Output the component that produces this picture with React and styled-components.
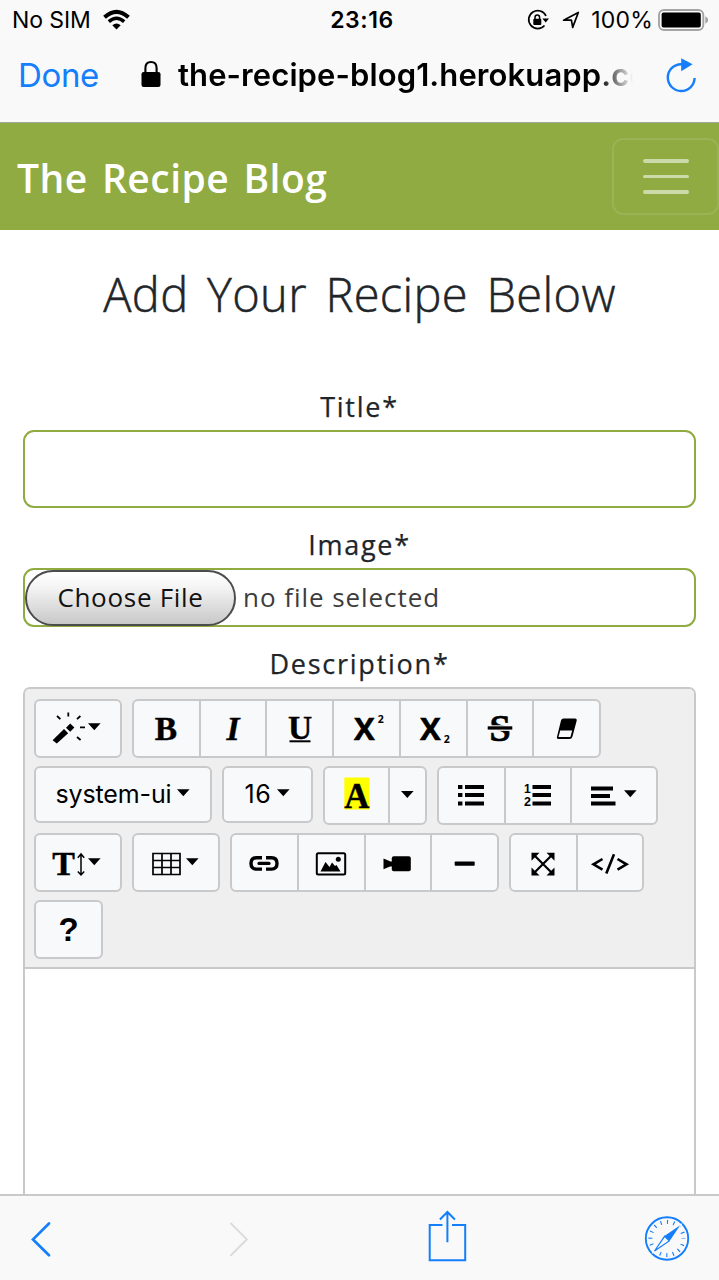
import React from 'react';
import styled, { createGlobalStyle, css } from 'styled-components';

const UI_FONT = 'Inter, "Liberation Sans", sans-serif';
const PAGE_FONT = '"Open Sans", "Noto Sans", sans-serif';
const GREEN = '#8fab42';
const BLUE = '#147efb';
const LINE = '#c8c9cb';

const GlobalStyle = createGlobalStyle`
  * { box-sizing: border-box; }
  body { margin: 0; background: #fff; }
  svg { display: block; flex: none; overflow: visible; }
`;

const Screen = styled.div`
  width: 719px;
  height: 1280px;
  display: flex;
  flex-direction: column;
  overflow: hidden;
  background: #fff;
  font-family: ${PAGE_FONT};
  color: #212529;
`;

const StatusBar = styled.header`
  height: 40px;
  flex: none;
  display: grid;
  grid-template-columns: 1fr auto 1fr;
  align-items: center;
  padding: 0 10px 0 12px;
  background: #f9f9f9;
  color: #000;
  font: 400 23px/40px ${UI_FONT};
`;

const StatusSide = styled.div`
  display: flex;
  align-items: center;
  justify-content: ${(p) => (p.$end ? 'flex-end' : 'flex-start')};
  letter-spacing: ${(p) => (p.$end ? '0.2px' : '-0.1px')};
`;

const Carrier = styled.span`
  margin-right: 12px;
`;

const Clock = styled.span`
  font-weight: 600;
  letter-spacing: 0.6px;
  padding-left: 3px;
`;

const BatteryLevel = styled.span`
  margin: 0 5px 0 11px;
`;

const IconGap = styled.span`
  width: 12px;
`;

const AddressBar = styled.div`
  height: 83px;
  flex: none;
  display: flex;
  align-items: center;
  padding: 0 22px 12px 18px;
  background: #f9f9f9;
  border-bottom: 1px solid #a3a99a;
  font-family: ${UI_FONT};
`;

const Done = styled.span`
  color: ${BLUE};
  font-size: 33px;
  letter-spacing: -0.35px;
  margin-right: 42px;
`;

const Address = styled.span`
  flex: 1;
  margin: 0 33px 0 17px;
  padding-bottom: 2px;
  overflow: hidden;
  white-space: nowrap;
  color: #000;
  font-size: 31px;
  font-weight: 600;
  letter-spacing: 0.1px;
  mask-image: linear-gradient(to right, #000 calc(100% - 34px), transparent 100%);
`;

const Navbar = styled.nav`
  height: 107px;
  flex: none;
  display: flex;
  align-items: center;
  justify-content: space-between;
  padding: 0 0 0 17px;
  background: ${GREEN};
`;

const Brand = styled.span`
  color: #fff;
  font-size: 39px;
  font-weight: 600;
  letter-spacing: 0.5px;
  word-spacing: 3.5px;
  padding-top: 2px;
`;

const MenuButton = styled.div`
  width: 107px;
  height: 77px;
  display: flex;
  flex-direction: column;
  align-items: center;
  justify-content: center;
  gap: 12px;
  border: 2px solid rgba(255, 255, 255, 0.1);
  border-radius: 11px;
`;

const MenuLine = styled.span`
  width: 46px;
  height: 3.6px;
  border-radius: 2px;
  background: rgba(255, 255, 255, 0.55);
`;

const Content = styled.main`
  flex: 1;
  min-height: 0;
  display: flex;
  flex-direction: column;
  overflow: hidden;
  padding: 34px 23px 0;
`;

const Heading = styled.h1`
  margin: 0 0 70px;
  text-align: center;
  font-size: 47px;
  font-weight: 300;
  line-height: 60px;
  letter-spacing: 0.35px;
  word-spacing: 6px;
  -webkit-text-stroke: 0.5px currentColor;
`;

const Label = styled.label`
  display: block;
  height: 36px;
  flex: none;
  text-align: center;
  font-size: 27px;
  line-height: 25px;
  letter-spacing: 1.75px;
  -webkit-text-stroke: 0.25px currentColor;
`;

const fieldFrame = css`
  flex: none;
  margin-bottom: 24px;
  border: 2px solid ${GREEN};
  border-radius: 11px;
`;

const TextField = styled.div`
  ${fieldFrame}
  height: 78px;
`;

const FileField = styled.div`
  ${fieldFrame}
  height: 59px;
  display: flex;
  align-items: center;
  font-size: 26px;
`;

const FileButton = styled.span`
  width: 211px;
  height: 56px;
  border: 2px solid #4c4c4c;
  border-radius: 28px;
  background: linear-gradient(#fff, #f4f4f4 30%, #c8c8c8);
  color: #111;
  text-align: center;
  line-height: 51px;
  letter-spacing: 0.7px;
`;

const FileName = styled.span`
  margin-left: 7px;
  padding-bottom: 2px;
  color: #3c3c3c;
  letter-spacing: 0.95px;
`;

const Editor = styled.section`
  flex: 1;
  min-height: 0;
  border: 2px solid ${LINE};
  border-bottom: 0;
  border-radius: 7px 7px 0 0;
`;

const Toolbar = styled.div`
  display: flex;
  flex-direction: column;
  gap: 8.3px;
  padding: 9.5px 9px 8px;
  border-bottom: 2px solid ${LINE};
  border-radius: 5px 5px 0 0;
  background: #efefef;
`;

const ToolRow = styled.div`
  display: flex;
  align-items: flex-start;
  gap: 10px;
`;

const ToolGroup = styled.div`
  width: ${(p) => p.$width}px;
  height: ${(p) => (p.$short ? 57 : 59)}px;
  display: flex;
  border: 2px solid ${LINE};
  border-radius: 6px;
  background: #f8f9fb;
  color: #000;
`;

const Tool = styled.div`
  flex: ${(p) => p.$grow || 1} 1 0;
  display: flex;
  align-items: center;
  justify-content: center;
  & + & {
    border-left: 2px solid ${LINE};
  }
`;

const ToolText = styled.span`
  font: 400 25px/1 ${UI_FONT};
  margin: 0 6px 0 3px;
  letter-spacing: ${(p) => p.$spacing}px;
`;

const Help = styled.span`
  font: 700 33px/1 "Liberation Sans", sans-serif;
`;

const BrowserBar = styled.footer`
  height: 86px;
  flex: none;
  display: flex;
  align-items: center;
  justify-content: space-between;
  padding: 0 30px;
  border-top: 2px solid #c9c9c9;
  background: #f9f9f9;
`;

/* Toolbar drawings share a coordinate system whose origin is the icon centre. */
const Glyph = ({ w = 48, children }) => (
  <svg width={w} height="48" viewBox={`${-w / 2} -24 ${w} 48`}>
    {children}
  </svg>
);

const Caret = ({ solo }) => (
  <svg width={solo ? 13 : 16} height="48" viewBox={solo ? '0 -24 13 48' : '0 -24 16 48'}>
    <path d="M0 -4.7H12.6L6.3 2.2Z" transform={solo ? 'translate(0 .8)' : undefined} />
  </svg>
);

const Serif = ({ children, x = 0, y = 12, size = 33.5, ...rest }) => (
  <text x={x} y={y} fontSize={size} fontWeight="700" textAnchor="middle" fontFamily='"Liberation Serif", serif' stroke="#000" strokeWidth=".4" {...rest}>
    {children}
  </text>
);

const Magic = () => (
  <Glyph w={36}>
    <path d="M-17.4 13.2L-6 2L-1.8 6.3L-13.2 16.5Z" transform="translate(0 -1)" />
    <path d="M-4 -.2L.2 -4.4L4.4 -.4L.2 3.8Z" />
    <path d="M-13 -12L-9.6 -8.8M-1.7 -15.5V-11.5M10.4 -12L7 -8.8M10 -.7H15M7 9L10.6 12" fill="none" stroke="#000" strokeWidth="1.8" />
  </Glyph>
);

const Script = ({ sub }) => (
  <Glyph>
    <text x="-13" y="11.5" fontSize="31" fontWeight="700" stroke="#000" strokeWidth=".5" fontFamily='"Open Sans", sans-serif'>X</text>
    <text x="10.7" y={sub ? 15 : -5} fontSize="10.5" fontWeight="700" fontFamily='"Open Sans", sans-serif'>2</text>
  </Glyph>
);

const Strike = () => (
  <Glyph>
    <Serif size={38} y={13} strokeWidth=".7">S</Serif>
    <path d="M-14 -2.7H14V2.9H-14Z" fill="#f8f9fb" />
    <path d="M-12.3 -1.7H12.3V1.6H-12.3Z" />
  </Glyph>
);

const Eraser = () => (
  <Glyph>
    <path d="M-3.5 -9.5H8Q10.3 -9.5 9.6 -7L5.4 8.7Q4.7 10.9 2.5 10.9H-8.5Q-10.6 10.9 -10 8.7L-6 -7.5Q-5.4 -9.5 -3.5 -9.5Z" />
    <path d="M-6.8 2.4H5.2L3.4 9H-8.5Z" fill="#f8f9fb" />
  </Glyph>
);

const FontColor = () => (
  <Glyph>
    <path d="M-12.7 -17.5H12.3V14.5H-12.7Z" fill="#ff0" />
    <Serif size={35} y={12.5}>A</Serif>
  </Glyph>
);

const Bullets = () => (
  <Glyph>
    <path d="M-13 -10h4.4v4h-4.4zM-13 -2h4.4v4h-4.4zM-13 6.5h4.4v4h-4.4zM-6 -10H13v4H-6zM-6 -2H13v4H-6zM-6 6.5H13v4H-6z" />
  </Glyph>
);

const Numbers = () => (
  <Glyph>
    <path d="M-5.5 -10H13v4H-5.5zM-5.5 -2H13v4H-5.5zM-5.5 6.5H13v4H-5.5z" />
    <text x="-14" y="-2" fontSize="12" fontWeight="700" fontFamily='"Liberation Sans", sans-serif'>1</text>
    <text x="-14" y="11" fontSize="12.5" fontWeight="700" fontFamily='"Liberation Sans", sans-serif'>2</text>
  </Glyph>
);

const Align = () => (
  <Glyph w={36}>
    <path d="M-15 -8.5H7v4H-15zM-15 -1H4v4H-15zM-15 6.5H9.5v4H-15z" />
  </Glyph>
);

const LineHeight = () => (
  <Glyph w={36}>
    <Serif size={34} x={-6.5} y={12.2}>T</Serif>
    <path d="M11 -8V11.5M7.8 -5.2L11 -9L14.2 -5.2M7.8 8.5L11 12L14.2 8.5" fill="none" stroke="#000" strokeWidth="1.5" />
  </Glyph>
);

const TableIcon = () => (
  <Glyph w={36}>
    <path d="M-15 -9.5H12V11.5H-15ZM-6 -9.5V11.5M3 -9.5V11.5M-15 -2.5H12M-15 4.5H12" fill="none" stroke="#000" strokeWidth="1.7" />
  </Glyph>
);

const LinkIcon = () => (
  <Glyph>
    <path d="M-2 -5.3H-7.5Q-13 -5.3 -13 .4T-7.5 6.1H-2M2 -5.3H7.5Q13 -5.3 13 .4T7.5 6.1H2" fill="none" stroke="#000" strokeWidth="3.4" />
    <path d="M-5 .4H5" stroke="#000" strokeWidth="3.2" strokeLinecap="round" />
  </Glyph>
);

const Picture = () => (
  <Glyph>
    <rect x="-14.2" y="-9.7" width="28.4" height="21.2" rx="1.5" fill="none" stroke="#000" strokeWidth="2" />
    <path d="M-10.5 8.5L-5.5 -1L-1.5 4L1 -.5L4 3L5.5 2L9.5 8.5Z" />
    <circle cx="7.3" cy="-3.7" r="2.5" />
  </Glyph>
);

const Video = () => (
  <Glyph>
    <path d="M-14.5 -4.5L-8 -1.8V3.5L-14.5 6.2Z" />
    <path d="M-8.5 -1.5H-5V3.5H-8.5Z" />
    <rect x="-6.2" y="-6.7" width="19" height="15" rx="2" />
  </Glyph>
);

const Minus = () => (
  <Glyph>
    <rect x="-10.3" y="-1.5" width="20" height="4.2" rx=".8" />
  </Glyph>
);

const Expand = () => (
  <Glyph>
    <path d="M-11.5 -10.3h8l-8 8zM11.5 -10.3h-8l8 8zM-11.5 12.4h8l-8 -8zM11.5 12.4h-8l8 -8z" />
    <path d="M-8 -7L8 9M8 -7L-8 9" stroke="#000" strokeWidth="2.2" />
  </Glyph>
);

const Code = () => (
  <Glyph>
    <path d="M-7.5 -4L-16.5 1.3L-7.5 6.6M7.5 -4L16.5 1.3L7.5 6.6M4 -8.7L-3.7 10.5" fill="none" stroke="#000" strokeWidth="2.6" />
  </Glyph>
);

const Wifi = () => (
  <svg width="27" height="20" viewBox="0 0 27 20">
    <path d="M1.5 7.3Q13.5 -3.5 25.5 7.3" fill="none" stroke="#000" strokeWidth="4" />
    <path d="M5.8 11.6Q13.5 4.8 21.2 11.6" fill="none" stroke="#000" strokeWidth="3.5" />
    <path d="M9.3 15.2Q13.5 11.8 17.7 15.2L13.5 19.4Z" />
  </svg>
);

const RotationLock = () => (
  <svg width="23" height="20" viewBox="0 0 23 20">
    <path d="M19 6A9 9 0 1 0 17.5 15.5" fill="none" stroke="#000" strokeWidth="1.7" />
    <path d="M15.3 8.5H22L18.7 12.5Z" />
    <rect x="6.3" y="8.7" width="8" height="6.2" rx="1" />
    <path d="M8 9V7.3Q8 5 10.3 5T12.6 7.3V9" fill="none" stroke="#000" strokeWidth="1.5" />
  </svg>
);

const LocationArrow = () => (
  <svg width="18" height="18" viewBox="0 0 18 18">
    <path d="M1.6 9.2L16.3 1.5L10.7 16.4L9.4 9.2Z" fill="none" stroke="#000" strokeWidth="1.7" strokeLinejoin="round" />
  </svg>
);

const Battery = () => (
  <svg width="51" height="22" viewBox="0 0 51 22">
    <rect x="1" y="1" width="44.3" height="20" rx="5" fill="none" stroke="#a4a4a4" strokeWidth="1.9" />
    <rect x="3.6" y="3.6" width="39.2" height="14.8" rx="2" />
    <path d="M47.3 7.3Q50.2 8.4 50.2 11T47.3 14.7Z" fill="#a4a4a4" />
  </svg>
);

const Padlock = () => (
  <svg width="20" height="28" viewBox="0 0 20 28">
    <rect x=".5" y="11" width="19" height="15" rx="2.2" />
    <path d="M4.4 12V7.2Q4.4 1 10 1T15.6 7.2V12" fill="none" stroke="#000" strokeWidth="2.1" />
  </svg>
);

const Reload = () => (
  <svg width="31" height="36" viewBox="0 0 31 36">
    <path d="M17.5 7.2H15A13.4 13.4 0 1 0 28.6 21" fill="none" stroke={BLUE} strokeWidth="2.4" />
    <path d="M15.2 1.3L26.6 7.2L15.2 14.2Z" fill={BLUE} />
  </svg>
);

const Chevron = ({ color, forward }) => (
  <svg width="22" height="36" viewBox="0 0 22 36">
    <path d={forward ? 'M1 3.5L16.8 19.4L1 35.3' : 'M19 3.5L3 19.4L19 35.3'} fill="none" stroke={color} strokeWidth={forward ? 2 : 2.7} strokeLinecap="round" />
  </svg>
);

const Share = () => (
  <svg width="38" height="54" viewBox="0 0 38 54">
    <path d="M13.5 14H.7V49.3H36.2V14H23" fill="none" stroke={BLUE} strokeWidth="2" />
    <path d="M18.4 31.3V1M10.9 8.5L18.4 1L25.9 8.5" fill="none" stroke={BLUE} strokeWidth="2" />
  </svg>
);

const Compass = () => (
  <svg width="44" height="46" viewBox="-22 -23.5 44 46">
    <circle r="21.2" fill="none" stroke={BLUE} strokeWidth="1.9" />
    <circle r="16.6" fill="none" stroke={BLUE} strokeWidth="4" strokeDasharray="1.1 5.419" strokeDashoffset=".55" />
    <path d="M15.5 -15.5L-5 -5L-15.5 15.5L5 5Z" fill="#f9f9f9" />
    <path d="M13.2 -13.2L-2.6 -2.6L2.6 2.6Z" fill={BLUE} />
    <path d="M-12.5 12.5L-2.4 -2.2L2.2 2.4Z" fill="#f9f9f9" stroke={BLUE} strokeWidth="1.2" />
  </svg>
);

export default function App() {
  return (
    <Screen>
      <GlobalStyle />
      <StatusBar>
        <StatusSide>
          <Carrier>No SIM</Carrier>
          <Wifi />
        </StatusSide>
        <Clock>23:16</Clock>
        <StatusSide $end>
          <RotationLock />
          <IconGap />
          <LocationArrow />
          <BatteryLevel>100%</BatteryLevel>
          <Battery />
        </StatusSide>
      </StatusBar>
      <AddressBar>
        <Done>Done</Done>
        <Padlock />
        <Address>the-recipe-blog1.herokuapp.com</Address>
        <Reload />
      </AddressBar>
      <Navbar>
        <Brand>The Recipe Blog</Brand>
        <MenuButton>
          <MenuLine />
          <MenuLine />
          <MenuLine />
        </MenuButton>
      </Navbar>
      <Content>
        <Heading>Add Your Recipe Below</Heading>
        <Label>Title*</Label>
        <TextField />
        <Label>Image*</Label>
        <FileField>
          <FileButton>Choose File</FileButton>
          <FileName>no file selected</FileName>
        </FileField>
        <Label>Description*</Label>
        <Editor>
          <Toolbar>
            <ToolRow>
              <ToolGroup $width={88}><Tool><Magic /><Caret /></Tool></ToolGroup>
              <ToolGroup $width={469}>
                <Tool><Glyph><Serif>B</Serif></Glyph></Tool>
                <Tool><Glyph><Serif fontStyle="italic">I</Serif></Glyph></Tool>
                <Tool>
                  <Glyph>
                    <Serif y={11}>U</Serif>
                    <path d="M-10.5 12.3H10.5V14.3H-10.5Z" />
                  </Glyph>
                </Tool>
                <Tool><Script /></Tool>
                <Tool><Script sub /></Tool>
                <Tool><Strike /></Tool>
                <Tool><Eraser /></Tool>
              </ToolGroup>
            </ToolRow>
            <ToolRow>
              <ToolGroup $width={178} $short><Tool><ToolText $spacing={-0.15}>system-ui</ToolText><Caret /></Tool></ToolGroup>
              <ToolGroup $width={91} $short><Tool><ToolText $spacing={0.6}>16</ToolText><Caret /></Tool></ToolGroup>
              <ToolGroup $width={104}>
                <Tool $grow={1.8}><FontColor /></Tool>
                <Tool><Caret solo /></Tool>
              </ToolGroup>
              <ToolGroup $width={221}>
                <Tool><Bullets /></Tool>
                <Tool><Numbers /></Tool>
                <Tool $grow={1.3}><Align /><Caret /></Tool>
              </ToolGroup>
            </ToolRow>
            <ToolRow>
              <ToolGroup $width={88}><Tool><LineHeight /><Caret /></Tool></ToolGroup>
              <ToolGroup $width={88}><Tool><TableIcon /><Caret /></Tool></ToolGroup>
              <ToolGroup $width={269}>
                <Tool><LinkIcon /></Tool>
                <Tool><Picture /></Tool>
                <Tool><Video /></Tool>
                <Tool><Minus /></Tool>
              </ToolGroup>
              <ToolGroup $width={135}>
                <Tool><Expand /></Tool>
                <Tool><Code /></Tool>
              </ToolGroup>
            </ToolRow>
            <ToolRow>
              <ToolGroup $width={69}><Tool><Help>?</Help></Tool></ToolGroup>
            </ToolRow>
          </Toolbar>
        </Editor>
      </Content>
      <BrowserBar>
        <Chevron color={BLUE} />
        <Chevron color="#dcdcdc" forward />
        <Share />
        <Compass />
      </BrowserBar>
    </Screen>
  );
}
